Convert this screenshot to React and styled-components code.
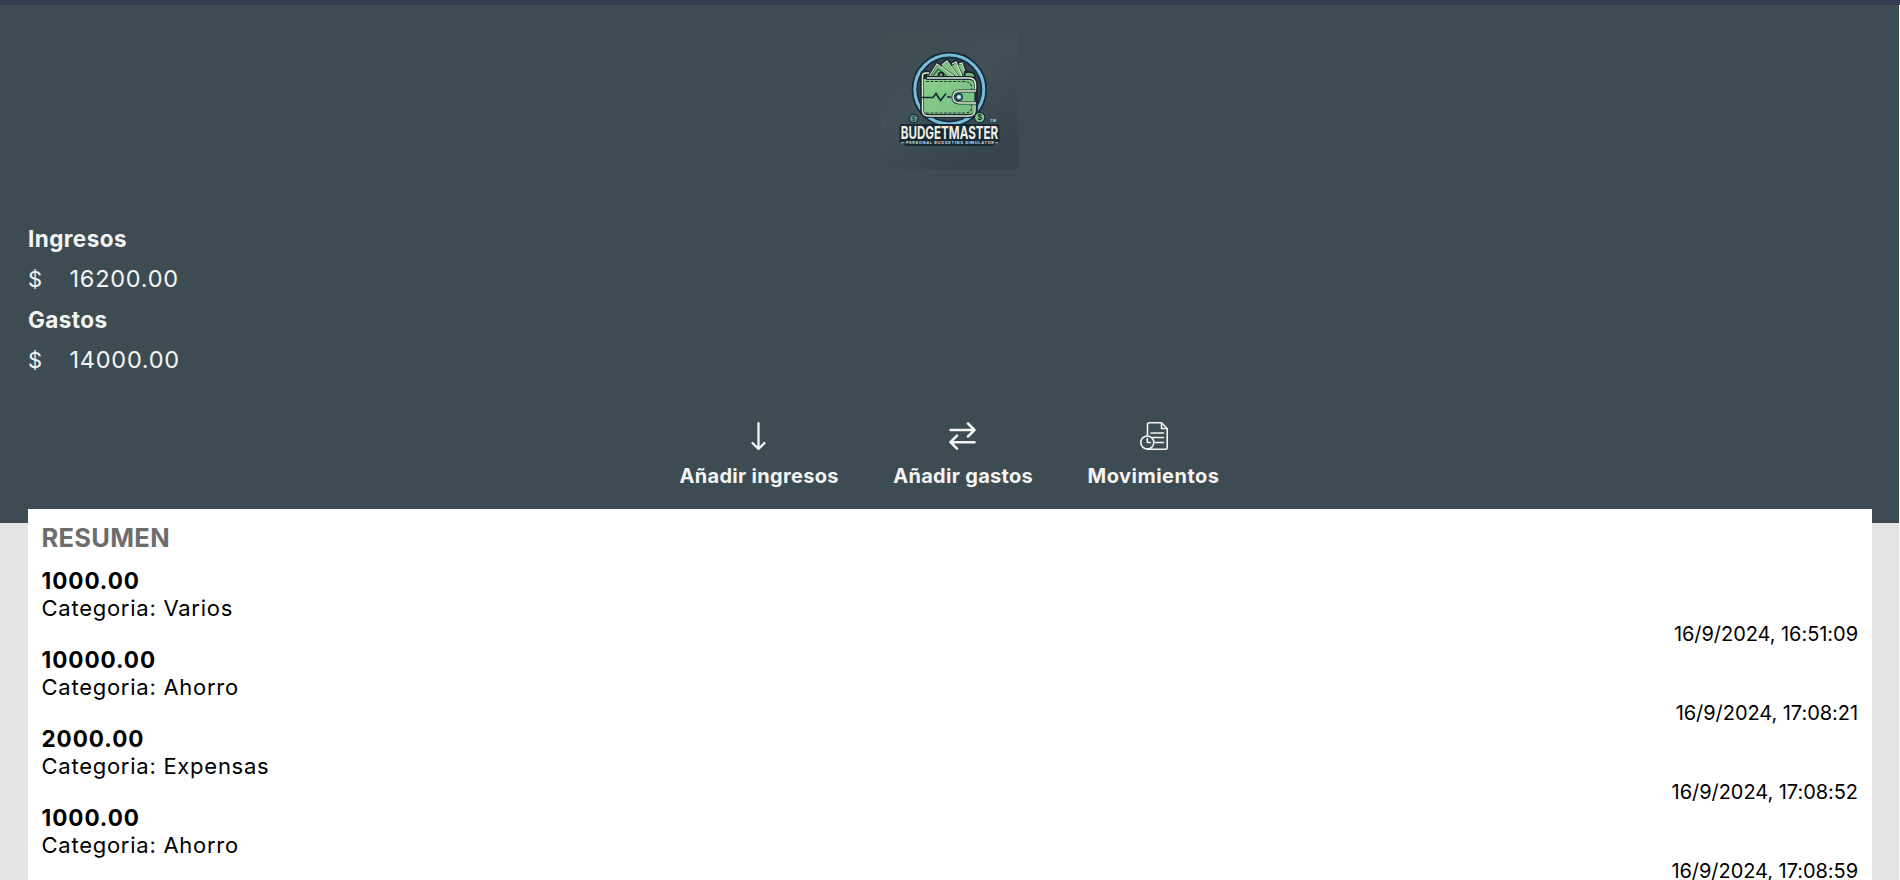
import React from "react";
import styled, { createGlobalStyle } from "styled-components";

const GlobalStyle = createGlobalStyle`
  *, *::before, *::after { box-sizing: border-box; }
  html, body { margin: 0; height: 100%; overflow: hidden; }
  body { background: #fff; font-family: Inter, "Liberation Sans", sans-serif; }
  h2, p { margin: 0; }
`;

const Page = styled.div`
  height: 880px;
  overflow: hidden;
  border-top: 5px solid #343c4f;
`;

const Content = styled.div`
  width: calc(100% - 1px);
  min-height: 875px;
  background: #e4e4e4;
`;

const Header = styled.header`
  display: flex;
  flex-direction: column;
  height: 518px;
  padding: 28px 28px 0;
  background: #3d4c52;
  color: #f4f4f4;
`;

const Logo = styled.svg`
  display: block;
  align-self: center;
  width: 137px;
  height: 137px;
`;

const Balance = styled.section`
  display: flex;
  flex-direction: column;
  margin-top: 48.5px;
  font-size: 22px;
  line-height: 40.6px;
`;

const BalanceLabel = styled.h2`
  font-size: 22.5px;
  font-weight: 750;
  letter-spacing: 0.42px;
`;

const Amount = styled.p`
  display: flex;
  gap: 27.5px;
  font-size: 23.5px;
  letter-spacing: 0.75px;
`;

const Currency = styled.span`
  width: 14px;
  font-size: 22px;
  letter-spacing: 0;
`;

const Actions = styled.nav`
  display: flex;
  justify-content: center;
  gap: 54.5px;
  margin-top: 41px;
`;

const Action = styled.button`
  display: flex;
  flex-direction: column;
  align-items: center;
  gap: 14px;
  padding: 0;
  border: 0;
  background: none;
  color: inherit;
  font: 750 20px/24px Inter, "Liberation Sans", sans-serif;
  letter-spacing: ${(p) => p.$tracking || "0.3px"};
  white-space: nowrap;
`;

const Icon = styled.svg`
  display: block;
  width: 28px;
  height: 28px;
  fill: none;
  stroke: #f4f4f4;
  stroke-width: ${(p) => p.$weight};
  stroke-linecap: round;
  stroke-linejoin: round;
`;

const Summary = styled.main`
  position: relative;
  min-height: 400px;
  margin: -14px 27px 0 28px;
  padding: 14px 14px 0 13.5px;
  background: #fff;
  color: #000;
`;

const SummaryTitle = styled.h2`
  margin-bottom: 14px;
  color: #6d6d6d;
  font-size: 25.5px;
  font-weight: 700;
  line-height: 30px;
  letter-spacing: 0.3px;
`;

const Movement = styled.article`
  display: flex;
  flex-direction: column;
  height: 79px;
`;

const MovementAmount = styled.p`
  font-size: 22.5px;
  font-weight: 750;
  line-height: 27px;
  letter-spacing: 0.95px;
`;

const Category = styled.p`
  font-size: 22px;
  font-weight: 400;
  line-height: 28px;
  letter-spacing: 0.74px;
`;

const Timestamp = styled.time`
  align-self: flex-end;
  margin-top: -1px;
  font-size: 20px;
  line-height: 26px;
  letter-spacing: -0.05px;
`;

const movements = [
  { amount: "1000.00", category: "Varios", date: "16/9/2024, 16:51:09" },
  { amount: "10000.00", category: "Ahorro", date: "16/9/2024, 17:08:21" },
  { amount: "2000.00", category: "Expensas", date: "16/9/2024, 17:08:52" },
  { amount: "1000.00", category: "Ahorro", date: "16/9/2024, 17:08:59" },
];

function BrandLogo() {
  return (
    <Logo viewBox="0 0 137 137" role="img" aria-label="BudgetMaster">
      <defs>
        <linearGradient id="plate" x1="0" y1="0" x2="0.6" y2="1">
          <stop offset="0" stopColor="#3f4c52" />
          <stop offset="0.5" stopColor="#414f57" />
          <stop offset="1" stopColor="#36454b" />
        </linearGradient>
        <linearGradient id="leather" x1="0" y1="0" x2="1" y2="1">
          <stop offset="0" stopColor="#8dcf8b" />
          <stop offset="1" stopColor="#76bd83" />
        </linearGradient>
      </defs>
      <rect width="137" height="137" fill="url(#plate)" />
      <circle cx="68.3" cy="56.5" r="34.500" fill="#34434d" stroke="#172b37" strokeWidth="6.4" />
      <circle cx="68.3" cy="56.5" r="34.500" fill="none" stroke="#79bddd" strokeWidth="3" />
      {/* banknotes */}
      <g fill="#7fc582" stroke="#172b37" strokeWidth="3.2" strokeLinejoin="round">
        <path d="M76 31 81 29 87 46H76Z M70 31 75 28 84 46H69Z M61 32 66 27 82 46H60Z M48 45 56 30 76 46Z" />
      </g>
      <g fill="#7fc582" strokeLinejoin="round" stroke="#172b37" strokeWidth="1.600">
        <path d="M76 32 81 30 86 45H76Z" />
        <path d="M69 33 75 29 83 45H69Z" />
        <path d="M60 33 66 28 79 45H60Z" />
        <path d="M48 45 56 31 76 45Z" />
      </g>
      <path
        d="M48 44 56 31 74 44M61 32 66 28 77 43M71 31 75 29 81 43M78 31 81 30 85 43"
        fill="none"
        stroke="#dcefc9"
        strokeWidth="1.2"
      />
      <path d="M52 43 57 36 66 43" fill="none" stroke="#316d4e" strokeWidth="1.5" />
      <circle cx="60" cy="42" r="3.5" fill="#172b37" />
      <circle cx="60" cy="42" r="1.4" fill="#a5a54e" />
      {/* wallet */}
      <path d="M84 39h5q5 0 5 5v7H82Z" fill="#71b778" stroke="#172b37" strokeWidth="2" />
      <path
        d="M41 42q0-3 3-3h4q-4 1-4 4 0 2 4 2h40q7 0 7 7v25q0 6-7 6H47q-6 0-6-6Z"
        fill="url(#leather)"
        stroke="#172b37"
        strokeWidth="3.8"
      />
      <path
        d="M48 40h-3q-3.500 0-3.500 3v34q0 6 6 6H87q7 0 7-6V69 M46 45h42q6.500 0 6.500 7v6"
        fill="none"
        stroke="#e1efcf"
        strokeWidth="1.4"
      />
      <path
        d="M45 48.500h38q7.500 0 7.500 6v3 M45 80h39q6.500 0 6.500-5V72"
        fill="none"
        stroke="#263c3d"
        strokeWidth="1.2"
        strokeDasharray="3 1.500"
      />
      <path d="M40 64.500h12l3-4 4.500 7 5.500-7M66 64h4" fill="none" stroke="#172b37" strokeWidth="1.6" />
      <path d="M95 58H78q-6 1-6 6t6 6h17Z" fill="#79c484" stroke="#172b37" strokeWidth="3.200" />
      <path d="M95 58H78q-6 1-6 6t6 6h17" fill="none" stroke="#e4f0d2" strokeWidth="1.400" />
      <circle cx="78" cy="64" r="3.200" fill="#83c9e0" stroke="#172b37" strokeWidth="1.400" />
      <circle cx="78" cy="64" r="1.200" fill="#f2f6ee" />
      {/* coins */}
      <circle cx="32.700" cy="85.500" r="4.200" fill="#5f9f91" stroke="#172b37" strokeWidth="1.200" />
      <text x="32.700" y="88" textAnchor="middle" fontSize="6.500" fontWeight="600" fill="#203b42">$</text>
      <circle cx="98.700" cy="84.500" r="5.200" fill="#85ca83" stroke="#172b37" strokeWidth="1.200" />
      <text x="98.700" y="87.200" textAnchor="middle" fontSize="7.500" fontWeight="700" fill="#172b37">$</text>
      {/* wordmark */}
      <path
        d="M21 91H115q3.500 0 3.500 3.500V107q0 4-3.500 4l-4 2H26l-4-2q-3.500 0-3.500-4V94.500Q18.500 91 21 91Z"
        fill="#162a36"
      />
      <text
        x="19.700"
        y="106"
        fontSize="17.500"
        fontWeight="700"
        fill="#f3efe5"
        textLength="97.500"
        lengthAdjust="spacingAndGlyphs"
      >
        BUDGETMASTER
      </text>
      <path d="M20 109.800h3.500M114 109.800h3" stroke="#d4dedb" strokeWidth="0.900" />
      <text
        x="25"
        y="111.300"
        fontSize="4"
        fontWeight="700"
        fill="#d4dedb"
        textLength="88"
        lengthAdjust="spacing"
      >
        PERSONAL BUDGETING SIMULATOR
      </text>
      <text x="109" y="89" fontSize="3.500" fontWeight="700" fill="#b8cbd0" textLength="6">TM</text>
    </Logo>
  );
}

function ArrowDownIcon() {
  return (
    <Icon viewBox="0 0 28 28" $weight={2.3}>
      <path d="M13.500 1.200v25.600M7.500 21l6 6 6-6" />
    </Icon>
  );
}

function ExchangeIcon() {
  return (
    <Icon viewBox="0 0 28 28" $weight={2.500}>
      <path d="M1.500 8h24M19 1.500 25.500 8 19 14.500M25.500 20.200h-24M8 13.700 1.500 20.200 8 26.700" />
    </Icon>
  );
}

function HistoryIcon() {
  return (
    <Icon viewBox="0 0 28 28" $weight={1.6}>
      <path d="M7.500 13.500V2.500q0-1.700 1.700-1.700H21.500L27.200 6.500V25.500q0 1.700-1.700 1.700H7" />
      <path d="M21.500 1v5.500h5.500M11 11h12.500M13 15.500h10.500M15 20.500h8.500" />
      <circle cx="7.300" cy="20.500" r="6.500" />
      <path d="M7.300 16.500v4h3" />
    </Icon>
  );
}

export default function App() {
  return (
    <Page>
      <GlobalStyle />
      <Content>
        <Header>
          <BrandLogo />
          <Balance>
            <BalanceLabel>Ingresos</BalanceLabel>
            <Amount><Currency>$</Currency><span>16200.00</span></Amount>
            <BalanceLabel>Gastos</BalanceLabel>
            <Amount><Currency>$</Currency><span>14000.00</span></Amount>
          </Balance>
          <Actions>
            <Action><ArrowDownIcon />Añadir ingresos</Action>
            <Action><ExchangeIcon />Añadir gastos</Action>
            <Action $tracking="0.48px"><HistoryIcon />Movimientos</Action>
          </Actions>
        </Header>
        <Summary>
          <SummaryTitle>RESUMEN</SummaryTitle>
          {movements.map((m) => (
            <Movement key={m.date}>
              <MovementAmount>{m.amount}</MovementAmount>
              <Category>Categoria: {m.category}</Category>
              <Timestamp>{m.date}</Timestamp>
            </Movement>
          ))}
        </Summary>
      </Content>
    </Page>
  );
}
